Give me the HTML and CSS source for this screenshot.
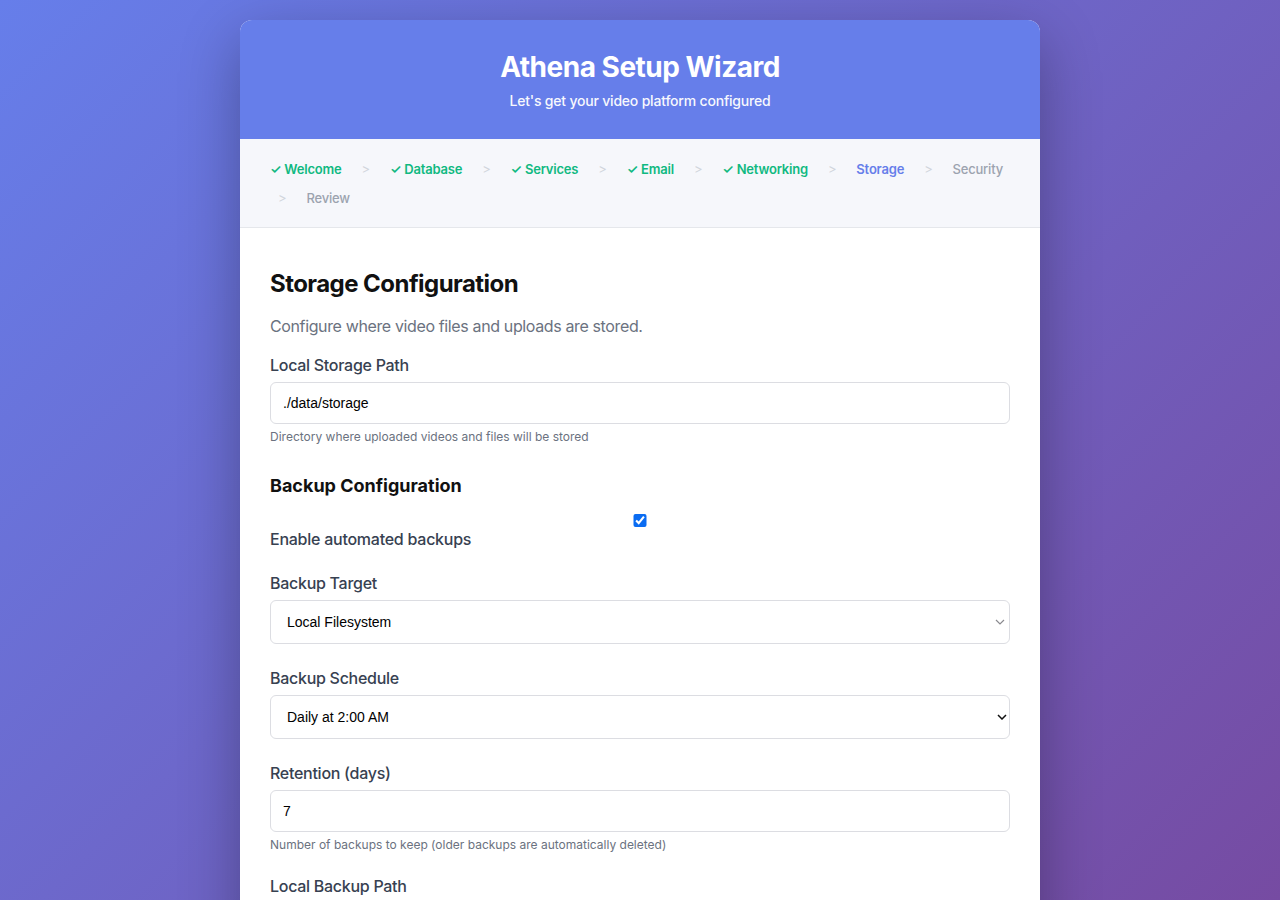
FILE: index.html
```html
<!DOCTYPE html>
<html lang="en">
<head>
<meta charset="utf-8">
<title>Athena Setup Wizard</title>
<link rel="stylesheet" href="styles.css">
</head>
<body>
<div class="wizard">
  <header class="wizard-header">
    <h1 class="wizard-title">Athena Setup Wizard</h1>
    <p class="wizard-subtitle">Let's get your video platform configured</p>
  </header>
  <nav class="steps">
    <span class="step done">✓ Welcome</span><span class="sep">&gt;</span>
    <span class="step done">✓ Database</span><span class="sep">&gt;</span>
    <span class="step done">✓ Services</span><span class="sep">&gt;</span>
    <span class="step done">✓ Email</span><span class="sep">&gt;</span>
    <span class="step done">✓ Networking</span><span class="sep">&gt;</span>
    <span class="step active">Storage</span><span class="sep">&gt;</span>
    <span class="step">Security</span><span class="sep">&gt;</span>
    <span class="step">Review</span>
  </nav>
  <main class="content">
    <h2 class="section-title">Storage Configuration</h2>
    <p class="section-desc">Configure where video files and uploads are stored.</p>

    <div class="field">
      <label class="field-label" for="storage-path">Local Storage Path</label>
      <input class="text-input" id="storage-path" type="text" value="./data/storage">
      <p class="hint">Directory where uploaded videos and files will be stored</p>
    </div>

    <h3 class="sub-title">Backup Configuration</h3>

    <div class="field">
      <label class="check-label">
        <input class="check" type="checkbox" checked>
        <span class="check-text">Enable automated backups</span>
      </label>
    </div>

    <div class="field">
      <label class="field-label" for="backup-target">Backup Target</label>
      <div class="select-wrap">
        <select class="select-input" id="backup-target">
          <option>Local Filesystem</option>
        </select>
        <svg class="chevron light" width="10" height="6" viewBox="0 0 10 6"><path d="M1 1l4 4 4-4" fill="none" stroke="currentColor" stroke-width="1.2"/></svg>
      </div>
    </div>

    <div class="field">
      <label class="field-label" for="backup-schedule">Backup Schedule</label>
      <div class="select-wrap">
        <select class="select-input" id="backup-schedule">
          <option>Daily at 2:00 AM</option>
        </select>
        <svg class="chevron dark" width="10" height="6" viewBox="0 0 10 6"><path d="M1 1l4 4 4-4" fill="none" stroke="currentColor" stroke-width="1.5"/></svg>
      </div>
    </div>

    <div class="field">
      <label class="field-label" for="retention">Retention (days)</label>
      <input class="text-input" id="retention" type="text" value="7">
      <p class="hint">Number of backups to keep (older backups are automatically deleted)</p>
    </div>

    <div class="field">
      <label class="field-label" for="backup-path">Local Backup Path</label>
      <input class="text-input" id="backup-path" type="text" value="./data/backups">
    </div>
  </main>
</div>
</body>
</html>
```
FILE: styles.css
```css
html {
  background: linear-gradient(135deg, #667eea 0%, #764ba2 100%) fixed;
  min-height: 100%;
}
body {
  margin: 0;
  padding: 20px 0;
  font-family: Inter, "Noto Sans", "Liberation Sans", sans-serif;
}
.wizard {
  width: 800px;
  margin: 0 auto;
  background: #ffffff;
  border-radius: 12px;
  overflow: hidden;
  box-shadow: 0 20px 60px rgba(0, 0, 0, 0.3);
}
.wizard-header {
  background: #667eea;
  color: #ffffff;
  text-align: center;
  padding: 30px 30px 30px;
}
.wizard-title {
  margin: 0;
  font-size: 28px;
  line-height: 34px;
  font-weight: 700;
  letter-spacing: -0.5px;
}
.wizard-subtitle {
  margin: 8px 0 0;
  font-size: 14px;
  line-height: 17px;
  font-weight: 500;
  letter-spacing: -0.2px;
  opacity: 0.95;
}
.steps {
  background: #f6f7fb;
  border-bottom: 1px solid #e5e7eb;
  padding: 22px 30px 20px;
  display: flex;
  flex-wrap: wrap;
  align-items: center;
  gap: 12px 12px;
  font-size: 13px;
  line-height: 17px;
  letter-spacing: -0.2px;
}
.step {
  color: #9ca3af;
  font-weight: 500;
}
.step.done {
  color: #10b981;
  font-weight: 600;
}
.step.active {
  color: #667eea;
  font-weight: 600;
}
.sep {
  color: #d1d5db;
  margin: 0 8px;
  font-size: 13px;
}
.content {
  padding: 41px 30px 40px;
}
.section-title {
  margin: 0 0 17px;
  font-size: 24px;
  line-height: 29px;
  font-weight: 700;
  letter-spacing: -0.55px;
  color: #111111;
}
.section-desc {
  margin: 0 0 19px;
  font-size: 16px;
  line-height: 22px;
  letter-spacing: -0.37px;
  color: #6b7280;
}
.field {
  margin-bottom: 25px;
}
.field-label {
  display: block;
  margin-bottom: 7px;
  font-size: 16px;
  line-height: 19px;
  font-weight: 500;
  letter-spacing: -0.28px;
  color: #374151;
}
.text-input {
  display: block;
  box-sizing: border-box;
  width: 100%;
  height: 42px;
  padding: 0 12px;
  border: 1px solid #dcdde2;
  border-radius: 6px;
  font-family: "Liberation Sans", Arial, sans-serif;
  font-size: 14px;
  color: #000000;
  background: #ffffff;
  outline: none;
}
.hint {
  margin: 5px 0 0;
  font-size: 12px;
  line-height: 15px;
  color: #6b7280;
}
.sub-title {
  margin: 31px 0 17px;
  font-size: 18px;
  line-height: 22px;
  font-weight: 700;
  color: #111111;
}
.check-label {
  display: block;
}
.check {
  display: block;
  width: 100%;
  height: 13px;
  margin: 0 0 3px;
  accent-color: #0a6cf2;
}
.check-text {
  display: block;
  font-size: 16px;
  line-height: 19px;
  font-weight: 500;
  letter-spacing: -0.25px;
  color: #374151;
}
.select-wrap {
  position: relative;
}
.select-input {
  display: block;
  box-sizing: border-box;
  width: 100%;
  height: 44px;
  padding: 0 30px 0 16px;
  border: 1px solid #dcdde2;
  border-radius: 6px;
  font-family: "Liberation Sans", Arial, sans-serif;
  font-size: 14px;
  color: #000000;
  background: #ffffff;
  -webkit-appearance: none;
  appearance: none;
  outline: none;
}
.chevron {
  position: absolute;
  right: 5px;
  top: 19px;
  pointer-events: none;
}
.chevron.light {
  color: #8a8a8f;
}
.chevron.dark {
  color: #111111;
  right: 3px;
}
```
